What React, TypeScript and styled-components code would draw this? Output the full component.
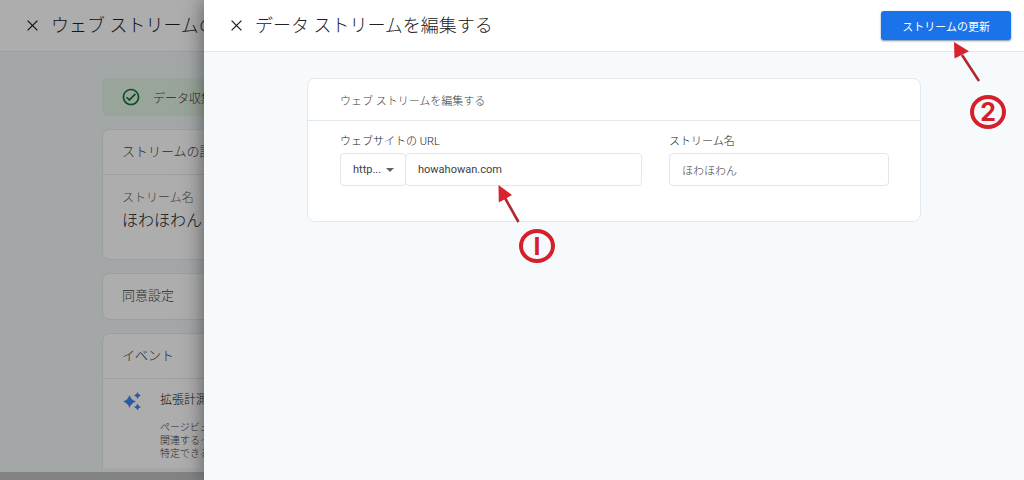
import React from 'react';
import styled, { createGlobalStyle } from 'styled-components';

const GlobalStyle = createGlobalStyle`
  *, *::before, *::after { box-sizing: border-box; }
  html, body, #root { height: 100%; }
  body {
    margin: 0;
    overflow: hidden;
    font-family: Roboto, 'Noto Sans CJK JP', sans-serif;
    font-weight: 300;
    color: #202124;
  }
  h1, h2, h3, p { margin: 0; font-weight: inherit; }
`;

const Shell = styled.div`
  position: relative;
  height: 100%;
  overflow: hidden;
`;

/* Stream details page, dimmed behind the drawer */
const Page = styled.div`
  display: flex;
  flex-direction: column;
  height: 100%;
  background: #f0f6f8;
  border-bottom: 8px solid #c2c2c2;
`;

const Bar = styled.header`
  display: flex;
  flex: none;
  align-items: center;
  gap: 9px;
  height: 52px;
  padding: 0 13px 0 22px;
  background: #fff;
  border-bottom: 1px solid #e4e6e8;
`;

const BarTitle = styled.h1`
  flex: 1;
  font-size: 18px;
  line-height: 28px;
  white-space: nowrap;
`;

const IconButton = styled.button`
  display: flex;
  align-items: center;
  justify-content: center;
  width: 20px;
  height: 20px;
  padding: 0;
  border: 0;
  background: none;
  color: #202124;
`;

const PageBody = styled.main`
  display: flex;
  flex: 1;
  flex-direction: column;
  gap: 13px;
  min-height: 0;
  margin-bottom: 4px;
  padding: 26px 102px 0;
  overflow: hidden;
`;

const Notice = styled.div`
  display: flex;
  flex: none;
  align-items: center;
  gap: 12px;
  height: 38px;
  padding: 0 19px;
  border-radius: 6px;
  background: #e2f3e4;
  color: #3c4043;
  font-size: 12px;
`;

const Card = styled.section`
  flex: none;
  overflow: hidden;
  border: 1px solid #e6e9ec;
  border-radius: 8px;
  background: #fff;
`;

const CardTitle = styled.h2<{ $small?: boolean; $divided?: boolean }>`
  display: flex;
  align-items: center;
  height: ${p => (p.$small ? 42 : 45)}px;
  padding: ${p => (p.$small ? '0 32px' : '0 19px 4px')};
  border-bottom: ${p => (p.$divided ? '1px solid #e6e9ec' : '0')};
  color: #3c4043;
  font-size: ${p => (p.$small ? 11 : 13)}px;
`;

const Detail = styled.div`
  height: 84px;
  padding: 13px 19px;
`;

const DetailLabel = styled.p`
  color: #5f6368;
  font-size: 12px;
  line-height: 20px;
`;

const DetailValue = styled.p`
  font-size: 16px;
  line-height: 26px;
`;

const EventRow = styled.div`
  display: flex;
  gap: 17px;
  height: 130px;
  padding: 12px 19px;
`;

const EventText = styled.div`
  color: #3c4043;
  font-size: 10px;
  line-height: 13px;
`;

const EventName = styled.h3`
  margin-bottom: 12px;
  color: #202124;
  font-size: 12px;
  line-height: 18px;
`;

const Scrim = styled.div`
  position: absolute;
  inset: 0;
  background: rgba(0, 0, 0, 0.32);
`;

const Drawer = styled.aside`
  position: absolute;
  inset: 0 0 0 204px;
  display: flex;
  flex-direction: column;
  background: #f6fafc;
  box-shadow: 0 0 20px rgba(0, 0, 0, 0.5);
`;

const UpdateButton = styled.button`
  height: 29px;
  padding: 0 21px;
  border: 0;
  border-radius: 3px;
  background: #1a73e8;
  box-shadow: 0 1px 2px rgba(26, 60, 120, 0.6);
  color: #fff;
  font: 400 11px Roboto, 'Noto Sans CJK JP', sans-serif;
`;

const DrawerBody = styled.div`
  flex: 1;
  padding: 26px 32px;

  ${Card} {
    max-width: 614px;
    margin: 0 auto;
    overflow: visible;
  }
`;

const Form = styled.form`
  display: flex;
  gap: 27px;
  padding: 11px 31px 35px 32px;
`;

const Field = styled.div<{ $grow: number }>`
  position: relative;
  flex: ${p => p.$grow} 1 0;
  min-width: 0;
`;

const Label = styled.label`
  display: block;
  margin-bottom: 1px;
  font-size: 11px;
  line-height: 20px;
`;

const Joined = styled.div`
  display: flex;
`;

const SelectBox = styled.div`
  position: relative;
  flex: none;
  width: 66px;
  margin-right: -1px;

  svg {
    position: absolute;
    top: 15px;
    right: 12px;
    pointer-events: none;
  }
`;

const control = `
  width: 100%;
  height: 33px;
  margin: 0;
  padding: 0 12px;
  border: 1px solid #e4e6e9;
  border-radius: 4px;
  outline: 0;
  background: #fff;
  color: #3c4043;
  font: 400 11px Roboto, 'Noto Sans CJK JP', sans-serif;
`;

const Select = styled.select`
  ${control}
  appearance: none;
`;

const Input = styled.input<{ $light?: boolean }>`
  ${control}
  font-weight: ${p => (p.$light ? 300 : 400)};
`;

/* Numbered step markers laid over the form */
const Marker = styled.div<{ $place: string }>`
  position: absolute;
  ${p => p.$place}
  width: 60px;
  height: 96px;
  pointer-events: none;

  svg { display: block; }
`;

const StepNumber = styled.span<{ $place: string; $face: string }>`
  position: absolute;
  ${p => p.$place}
  display: flex;
  align-items: center;
  justify-content: center;
  width: 36px;
  height: 34px;
  border: 4px solid #d5202a;
  border-radius: 50%;
  color: #d5202a;
  font: 700 25px/1 ${p => p.$face}, sans-serif;
`;

const CloseIcon = () => (
  <svg width="11" height="11" viewBox="0 0 11 11" fill="none" stroke="currentColor" strokeWidth="1.3">
    <path d="M.6.6l9.8 9.8M10.4.6L.6 10.4" />
  </svg>
);

const CheckIcon = () => (
  <svg width="20" height="20" viewBox="0 0 24 24" fill="#137333">
    <path d="M12 2C6.48 2 2 6.48 2 12s4.48 10 10 10 10-4.48 10-10S17.520 2 12 2zm0 18c-4.410 0-8-3.590-8-8s3.590-8 8-8 8 3.590 8 8-3.590 8-8 8zm4.590-12.420L10 14.170l-2.590-2.580L6 13l4 4 8-8z" />
  </svg>
);

const SparkIcon = () => (
  <svg width="21" height="21" viewBox="0 0 21 21" fill="#4285f4">
    <path d="M7.500 4Q9 9 14 10.500Q9 12 7.500 17Q6 12 1 10.500Q6 9 7.500 4z" />
    <path d="M15.500 1Q16.300 3.700 19 4.500Q16.300 5.300 15.500 8Q14.700 5.300 12 4.500Q14.700 3.700 15.500 1z" />
    <path d="M15.500 12.500Q16.300 15.200 19 16Q16.300 16.800 15.500 19.500Q14.700 16.800 12 16Q14.700 15.200 15.500 12.500z" />
  </svg>
);

export default function App() {
  return (
    <Shell>
      <GlobalStyle />
      <Page>
        <Bar>
          <IconButton type="button" aria-label="閉じる"><CloseIcon /></IconButton>
          <BarTitle>ウェブ ストリームの詳細</BarTitle>
        </Bar>
        <PageBody>
          <Notice><CheckIcon />データ収集</Notice>
          <Card>
            <CardTitle $divided>ストリームの詳細</CardTitle>
            <Detail>
              <DetailLabel>ストリーム名</DetailLabel>
              <DetailValue>ほわほわん</DetailValue>
            </Detail>
          </Card>
          <Card><CardTitle>同意設定</CardTitle></Card>
          <Card>
            <CardTitle $divided>イベント</CardTitle>
            <EventRow>
              <SparkIcon />
              <EventText>
                <EventName>拡張計測</EventName>
                <p>ページビュー</p>
                <p>関連するイベント</p>
                <p>特定できる</p>
              </EventText>
            </EventRow>
          </Card>
        </PageBody>
      </Page>
      <Scrim />
      <Drawer>
        <Bar>
          <IconButton type="button" aria-label="閉じる"><CloseIcon /></IconButton>
          <BarTitle>データ ストリームを編集する</BarTitle>
          <UpdateButton type="submit" form="stream">ストリームの更新</UpdateButton>
        </Bar>
        <DrawerBody>
          <Card>
            <CardTitle $small $divided>ウェブ ストリームを編集する</CardTitle>
            <Form id="stream" onSubmit={e => e.preventDefault()}>
              <Field $grow={302}>
                <Label htmlFor="url">ウェブサイトの URL</Label>
                <Joined>
                  <SelectBox>
                    <Select aria-label="プロトコル"><option>http...</option></Select>
                    <svg width="8" height="4" viewBox="0 0 8 4"><path d="M0 0h8L4 4z" fill="#5f6368" /></svg>
                  </SelectBox>
                  <Input id="url" defaultValue="howahowan.com" />
                </Joined>
                <Marker $place="top: 52px; left: 156px;">
                  <svg width="30" height="42" viewBox="0 0 30 42">
                    <path d="M9 14L22.500 38" stroke="#b3262b" strokeWidth="2.600" />
                    <path d="M2.500 1L2.800 18.500L16 11z" fill="#d8232a" />
                  </svg>
                  <StepNumber $place="top: 45px; left: 23px;" $face="'Liberation Sans'">I</StepNumber>
                </Marker>
              </Field>
              <Field $grow={220}>
                <Label htmlFor="name">ストリーム名</Label>
                <Input id="name" $light defaultValue="ほわほわん" />
              </Field>
            </Form>
          </Card>
        </DrawerBody>
        <Marker $place="top: 41px; right: 12px;">
          <svg width="30" height="42" viewBox="0 0 30 42">
            <path d="M10 14L27 40" stroke="#b3262b" strokeWidth="2.600" />
            <path d="M2 1L2.500 17.500L17 10.200z" fill="#d8232a" />
          </svg>
          <StepNumber $place="top: 54px; left: 18px;" $face="Inter">2</StepNumber>
        </Marker>
      </Drawer>
    </Shell>
  );
}
